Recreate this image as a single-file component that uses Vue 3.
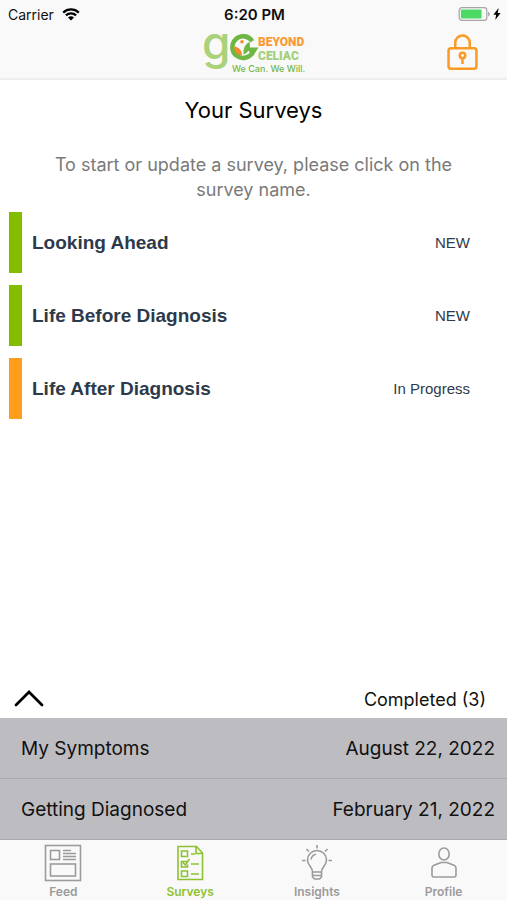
<template>
  <div class="screen">
    <header class="top">
      <div class="status-bar">
        <div class="carrier">
          <span>Carrier</span>
          <svg class="wifi" viewBox="0 0 18 13" aria-hidden="true">
            <path d="M1.2 4.6a11.2 11.2 0 0 1 15.6 0" />
            <path d="M3.9 7.4a7.2 7.2 0 0 1 10.2 0" />
            <path class="dot" d="M9 12.6L6 9.6a4.3 4.3 0 0 1 6 0z" />
          </svg>
        </div>
        <div class="clock">6:20 PM</div>
        <div class="power">
          <svg class="battery" viewBox="0 0 32 14" aria-hidden="true">
            <rect class="shell" x="0.7" y="0.7" width="27.6" height="12.6" rx="2.6" />
            <rect class="charge" x="2.4" y="2.4" width="20.6" height="9.2" rx="0.8" />
            <path class="tip" d="M29.6 4.4c2.2 1 2.2 4.2 0 5.2z" />
          </svg>
          <svg class="bolt" viewBox="0 0 8 12" aria-hidden="true">
            <path d="M5.6 0L0.4 6.8h2.8L2.2 12l5.4-7H4.8z" />
          </svg>
        </div>
      </div>

      <div class="nav-bar">
        <svg class="logo" viewBox="0 0 104 44" role="img" aria-label="Go Beyond Celiac">
          <text class="logo-g" x="0" y="27">g</text>
          <path class="ring" d="M50.2 9.2A10.800 10.800 0 1 0 51 19.600" />
          <path class="arrow" d="M43.500 15.500h13l-5.500 8.500z" />
          <path class="leaf-orange" d="M40 23.500c-5.500-.5-8-4-7.800-9 4.800.5 7.800 4 7.800 9z" />
          <path class="leaf-green" d="M41.500 22.500c-.5-6 1.500-10.500 6-12.500 1.500 5.500-.5 10.500-6 12.500z" />
          <circle class="leaf-orange" cx="40" cy="9.800" r="1.800" />
          <text class="word orange" x="56" y="14">BEYOND</text>
          <text class="word green" x="56" y="28">CELIAC</text>
          <text class="tagline" x="30" y="40">We Can. We Will.</text>
        </svg>
        <button class="lock" type="button" aria-label="Lock">
          <svg viewBox="0 0 32 38" aria-hidden="true">
            <path d="M8.500 15V9.500a7.500 7.500 0 0 1 15 0V15" />
            <rect x="1.600" y="15.200" width="28.800" height="21" rx="2.500" />
            <circle cx="16" cy="22.600" r="2.800" />
            <path d="M16 25.400v6" />
          </svg>
        </button>
      </div>
    </header>

    <main class="content">
      <h1>Your Surveys</h1>
      <p class="hint">To start or update a survey, please click on the survey name.</p>
      <ul class="surveys">
        <li v-for="survey in surveys" :key="survey.name">
          <button class="survey" :class="survey.state" type="button">
            <span class="survey-name">{{ survey.name }}</span>
            <span class="survey-status">{{ survey.status }}</span>
          </button>
        </li>
      </ul>
    </main>

    <section class="completed">
      <button class="completed-toggle" type="button" :aria-expanded="isOpen" @click="isOpen = !isOpen">
        <svg :class="{ closed: !isOpen }" viewBox="0 0 30 18" aria-hidden="true">
          <path d="M2 15L15 2l13 13" />
        </svg>
        <span>Completed (3)</span>
      </button>
      <ul v-if="isOpen" class="completed-list">
        <li v-for="item in completed" :key="item.name">
          <span>{{ item.name }}</span>
          <span>{{ item.date }}</span>
        </li>
      </ul>
    </section>

    <nav class="tabs">
      <a class="tab" href="#feed">
        <svg viewBox="0 0 38 38" aria-hidden="true">
          <rect x="1.500" y="1.500" width="35" height="35" />
          <rect x="6.500" y="6.500" width="9" height="9" />
          <rect x="6.500" y="20" width="25" height="12" />
          <path d="M19 6.500h8M19 9.500h13M19 12.500h13M19 15.500h13" />
        </svg>
        <span>Feed</span>
      </a>
      <a class="tab active" href="#surveys">
        <svg viewBox="0 0 38 38" aria-hidden="true">
          <path d="M7 2.500h18.500l6 6.500v26.500H7zM25 2.500v7h6.500" />
          <path d="M10.500 7h6v5.500h-6zM16 17.500h-5.500V23h6v-2.500M12 18.500l2.300 2.500 4.200-6M10.500 27h6v5.500h-6z" />
          <path d="M20 10h4M20 20h8M20 30h8" />
        </svg>
        <span>Surveys</span>
      </a>
      <a class="tab" href="#insights">
        <svg viewBox="0 0 38 38" aria-hidden="true">
          <path d="M14.500 28c0-5-5-6.500-5-12a9.500 9.500 0 0 1 19 0c0 5.500-5 7-5 12z" />
          <path d="M14.500 28v5l2 2h5l2-2v-5M14.500 31.500h9" />
          <path d="M13 15.500a6.500 6.500 0 0 1 5-5.300" />
          <path d="M19 1v3.500M8.500 5l2.500 2.500M29.500 5L27 7.500M4 16.500h3.500M30.500 16.500H34" />
        </svg>
        <span>Insights</span>
      </a>
      <a class="tab" href="#profile">
        <svg viewBox="0 0 38 38" aria-hidden="true">
          <ellipse cx="19" cy="10" rx="5.200" ry="6" />
          <path d="M7 31V24c0-1.500.8-2.300 2-2.800l7-2.700h6l7 2.700c1.200.5 2 1.300 2 2.800v7c0 1.500-.8 2-2 2H9c-1.200 0-2-.5-2-2z" />
        </svg>
        <span>Profile</span>
      </a>
    </nav>
  </div>
</template>

<script setup>
import { ref } from 'vue';

const isOpen = ref(true);

const surveys = [
  { name: 'Looking Ahead', status: 'NEW', state: 'new' },
  { name: 'Life Before Diagnosis', status: 'NEW', state: 'new' },
  { name: 'Life After Diagnosis', status: 'In Progress', state: 'progress' },
];

const completed = [
  { name: 'My Symptoms', date: 'August 22, 2022' },
  { name: 'Getting Diagnosed', date: 'February 21, 2022' },
];
</script>

<style>
body {
  margin: 0;
  background: #fff;
}
</style>

<style scoped>
.screen {
  display: flex;
  flex-direction: column;
  min-height: 100vh;
  font-family: Inter, "Liberation Sans", sans-serif;
  color: #111;
}

button {
  padding: 0;
  border: 0;
  background: none;
  color: inherit;
  font: inherit;
  cursor: pointer;
}

ul {
  margin: 0;
  padding: 0;
  list-style: none;
}

svg {
  display: block;
  fill: none;
}

/* Header */
.top {
  background: #f9f9f9;
  border-bottom: 2px solid #eee;
}

.status-bar {
  display: grid;
  grid-template-columns: 1fr auto 1fr;
  align-items: center;
  height: 28px;
  padding: 0 6px 0 8px;
  font-size: 14px;
}

.carrier,
.power {
  display: flex;
  align-items: center;
  gap: 8px;
}

.power {
  justify-content: flex-end;
  gap: 2px;
}

.clock {
  font-size: 15px;
  font-weight: 600;
}

.wifi {
  width: 18px;
  height: 13px;
  stroke: #000;
  stroke-width: 2.2;
}

.wifi .dot {
  fill: #000;
  stroke: none;
}

.battery {
  width: 33px;
  height: 14px;
}

.shell {
  stroke: #a5a5a5;
  stroke-width: 1.2;
}

.charge {
  fill: #4cd964;
}

.tip {
  fill: #a5a5a5;
}

.bolt {
  width: 8px;
  height: 12px;
  fill: #000;
}

.nav-bar {
  display: grid;
  grid-template-columns: 1fr auto 1fr;
  height: 50px;
  padding: 0 29px;
}

.logo {
  grid-column: 2;
  width: 104px;
  height: 44px;
  margin-top: 4px;
  overflow: visible;
}

.logo-g {
  font-size: 46px;
  font-weight: 500;
  fill: #a9d27a;
}

.ring {
  stroke: #6fb743;
  stroke-width: 4.6;
}

.arrow,
.leaf-green {
  fill: #6fb743;
}

.leaf-orange {
  fill: #f58a2c;
}

.word {
  font-family: Roboto, "Liberation Sans", sans-serif;
  font-size: 12px;
  font-weight: 900;
}

.orange {
  fill: #fa9a35;
}

.green {
  fill: #a3d078;
}

.tagline {
  font-size: 9px;
  font-weight: 500;
  fill: #74b64a;
}

.lock {
  justify-self: end;
  align-self: start;
  margin-top: 5px;
}

.lock svg {
  width: 31px;
  height: 38px;
  stroke: #fb9b25;
  stroke-width: 2.6;
}

/* Survey list */
.content {
  flex: 1;
}

h1 {
  margin: 16px 0 0;
  font-size: 22px;
  font-weight: 400;
  line-height: 28px;
  text-align: center;
  color: #000;
}

.hint {
  margin: 28px 48px 10px;
  font-size: 18px;
  line-height: 25px;
  text-align: center;
  color: #7a7a7a;
}

.surveys {
  display: grid;
  gap: 12px;
  padding: 0 9px;
}

.survey {
  display: flex;
  align-items: center;
  justify-content: space-between;
  width: 100%;
  height: 61px;
  padding: 0 28px 0 10px;
  border-left: 13px solid #84bd00;
  font-family: "Liberation Sans", sans-serif;
  color: #2d3a4b;
}

.survey.progress {
  border-left-color: #ff9e1b;
}

.survey-name {
  font-size: 19px;
  font-weight: 700;
}

.survey-status {
  font-size: 15px;
}

/* Completed drawer */
.completed-toggle {
  display: flex;
  align-items: center;
  justify-content: space-between;
  width: 100%;
  height: 38px;
  padding: 0 21px 0 14px;
  font-size: 18px;
}

.completed-toggle svg {
  width: 30px;
  height: 18px;
  stroke: #000;
  stroke-width: 2.8;
  stroke-linecap: round;
}

.completed-toggle svg.closed {
  transform: rotate(180deg);
}

.completed-list {
  background: #bdbcc1;
}

.completed-list li {
  display: flex;
  align-items: center;
  justify-content: space-between;
  box-sizing: border-box;
  height: 61px;
  padding: 1px 12px 0 21px;
  border-bottom: 1px solid #a9a8ad;
  font-size: 19px;
}

/* Tab bar */
.tabs {
  display: grid;
  grid-template-columns: repeat(4, 1fr);
  height: 60px;
  background: #f9f9f9;
}

.tab {
  display: flex;
  flex-direction: column;
  align-items: center;
  padding-top: 4px;
  font-size: 12px;
  font-weight: 600;
  line-height: 20px;
  text-decoration: none;
  color: #9b9b9b;
}

.tab svg {
  width: 38px;
  height: 38px;
  stroke: currentColor;
  stroke-width: 1.6;
}

.tab.active {
  color: #8cc230;
}
</style>
